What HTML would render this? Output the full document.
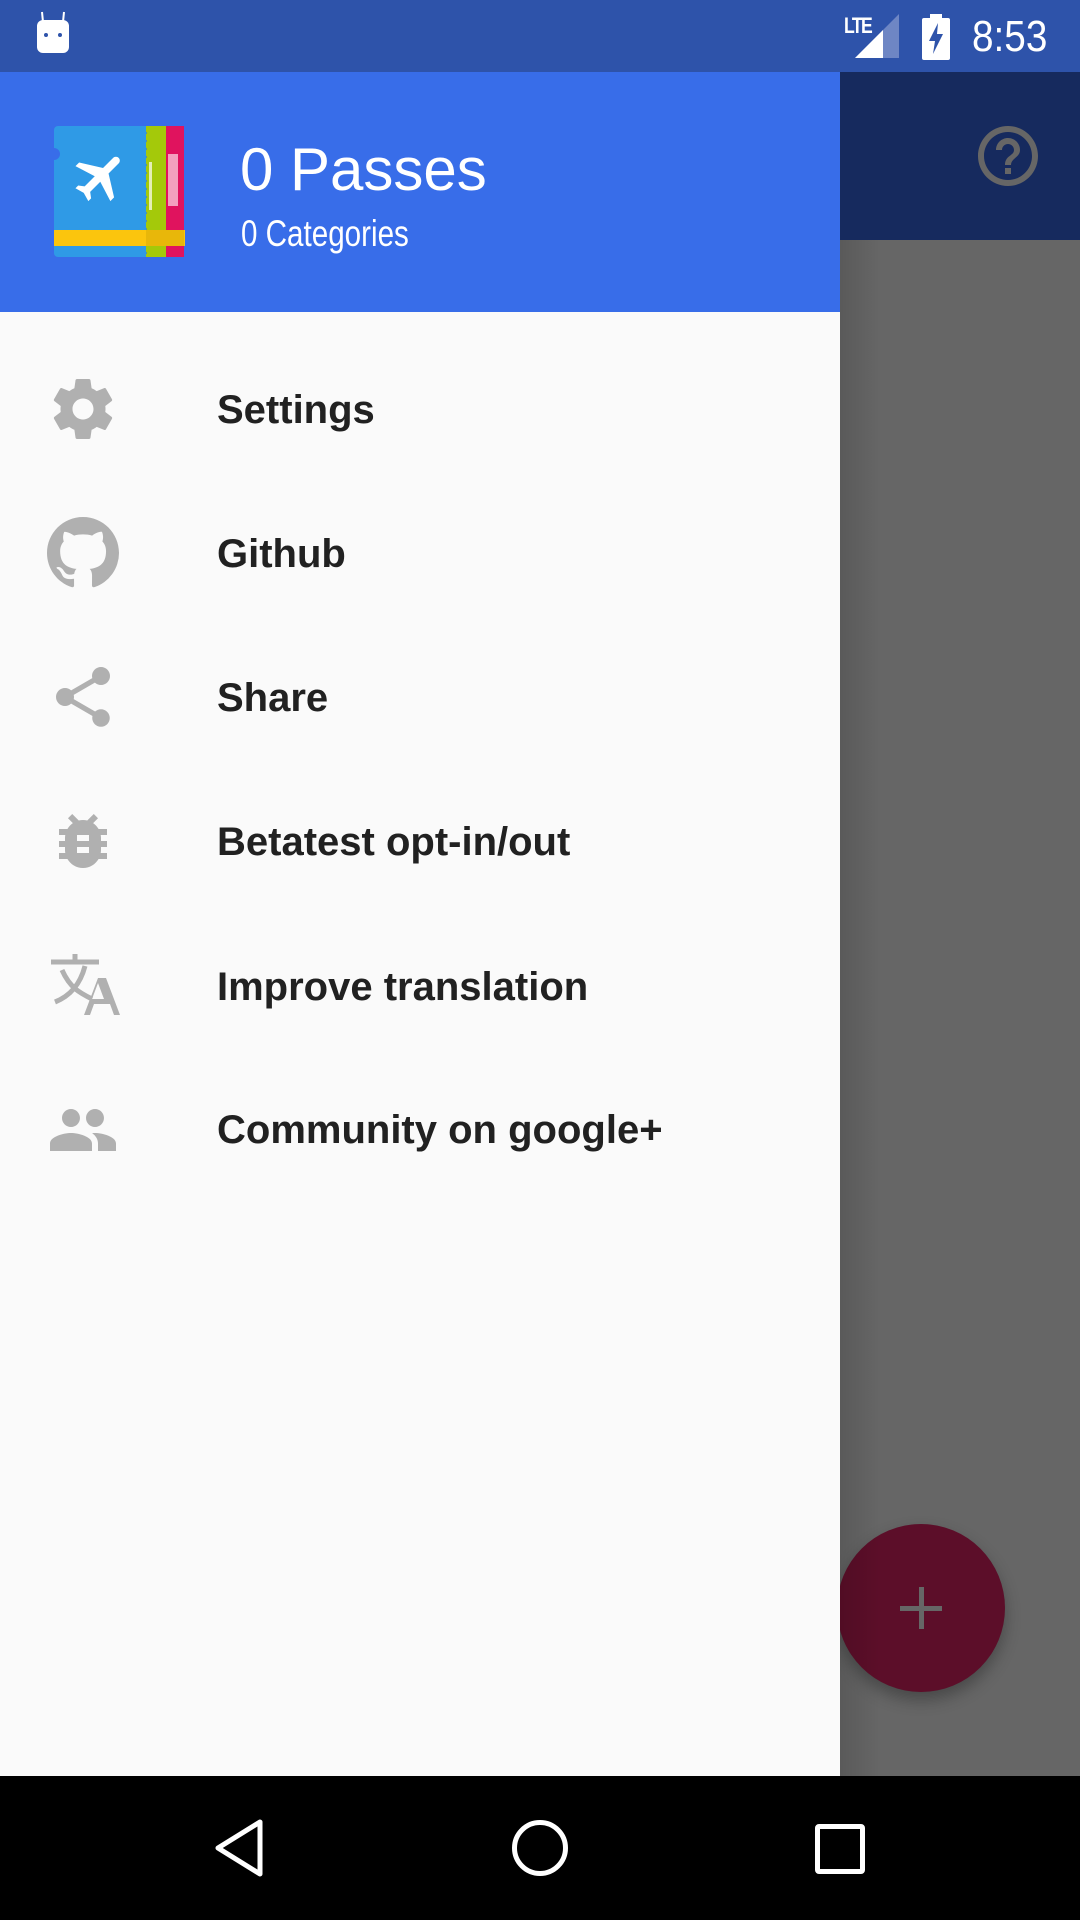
<!DOCTYPE html>
<html><head><meta charset="utf-8">
<style>
*{margin:0;padding:0;box-sizing:border-box}
html,body{width:1080px;height:1920px;overflow:hidden;background:#fafafa;font-family:"Liberation Sans",sans-serif}
.abs{position:absolute}
</style></head>
<body>
<div class="abs" style="left:840px;top:0;width:240px;height:1776px;background:#666"></div>
<div class="abs" style="left:840px;top:72px;width:240px;height:168px;background:#162a5e"></div>
<svg class="abs" style="left:972px;top:120px" width="72" height="72" viewBox="0 0 24 24"><path fill="#666" d="M11 18h2v-2h-2v2zm1-16C6.48 2 2 6.480 2 12s4.48 10 10 10 10-4.48 10-10S17.52 2 12 2zm0 18c-4.41 0-8-3.59-8-8s3.59-8 8-8 8 3.59 8 8-3.59 8-8 8zm0-14c-2.21 0-4 1.79-4 4h2c0-1.1.9-2 2-2s2 .9 2 2c0 2-3 1.75-3 5h2c0-2.25 3-2.5 3-5 0-2.21-1.79-4-4-4z"/></svg>
<div class="abs" style="left:837px;top:1524px;width:168px;height:168px;border-radius:50%;background:#5c0e29;box-shadow:0 8px 16px rgba(0,0,0,0.3)"></div>
<div class="abs" style="left:900px;top:1606px;width:42px;height:5px;background:#666"></div>
<div class="abs" style="left:919px;top:1587px;width:5px;height:42px;background:#666"></div>
<div class="abs" style="left:840px;top:240px;width:40px;height:1536px;background:linear-gradient(to right,rgba(0,0,0,0.12),rgba(0,0,0,0))"></div>

<div class="abs" style="left:0;top:0;width:1080px;height:72px;background:#2e53aa"></div>
<svg class="abs" style="left:34px;top:10px" width="40" height="46" viewBox="0 0 40 46"><line x1="8" y1="2" x2="9" y2="12" stroke="#fff" stroke-width="2"/><line x1="30" y1="2" x2="29" y2="12" stroke="#fff" stroke-width="2"/><rect x="3" y="10" width="32" height="33" rx="6" fill="#fff"/><circle cx="12" cy="25" r="2" fill="#2e53aa"/><circle cx="26" cy="25" r="2" fill="#2e53aa"/></svg>
<div class="abs" style="left:844px;top:13px;color:#fff;font-size:22px;font-weight:bold;letter-spacing:-2px;transform:scaleX(0.8);transform-origin:left">LTE</div>
<svg class="abs" style="left:855px;top:14px" width="44" height="44" viewBox="0 0 44 44"><polygon points="44,0 44,44 0,44" fill="#6e86c4"/><polygon points="28,16 28,44 0,44" fill="#fff"/></svg>
<svg class="abs" style="left:921px;top:14px" width="30" height="46" viewBox="0 0 30 46"><rect x="9" y="0" width="12" height="5" fill="#fff"/><rect x="1" y="4" width="28" height="42" rx="2" fill="#fff"/><polygon points="17,9 8,27 14,27 12,40 22,20 16,20" fill="#2e53aa"/></svg>
<div class="abs" style="left:972px;top:12px;color:#fff;font-size:44px;transform:scaleX(0.88);transform-origin:left">8:53</div>

<div class="abs" style="left:0;top:72px;width:840px;height:1704px;background:#fafafa"></div>
<div class="abs" style="left:0;top:72px;width:840px;height:240px;background:#386de9"></div>
<svg class="abs" style="left:54px;top:126px" width="132" height="132" viewBox="0 0 132 132">
<path d="M108 0h22v131h-22l3-4-3-4 3-4-3-4 3-4-3-4 3-4-3-4 3-4-3-4 3-4-3-4 3-4-3-4 3-4-3-4 3-4-3-4 3-4-3-4 3-4-3-4 3-4-3-4 3-4-3-4 3-4-3-4 3-4-3-4 3-4-3-4z" fill="#e0135e"/>
<path d="M90 0h22v131h-22l3-4-3-4 3-4-3-4 3-4-3-4 3-4-3-4 3-4-3-4 3-4-3-4 3-4-3-4 3-4-3-4 3-4-3-4 3-4-3-4 3-4-3-4 3-4-3-4 3-4-3-4 3-4-3-4 3-4-3-4 3-4-3-4z" fill="#a4c90a"/>
<path d="M4 0h88v131H4a4 4 0 0 1-4-4V34a6 6 0 0 0 0-12V4a4 4 0 0 1 4-4z" fill="#2f9ae6"/>
<rect x="0" y="104" width="131" height="16" fill="#fbc50d"/>
<rect x="92" y="104" width="38" height="16" fill="#e8b70a"/>
<g transform="translate(16,20) scale(2.6) rotate(45 12 12)"><path fill="#fff" d="M21 16v-2l-8-5V3.5c0-.83-.67-1.5-1.5-1.5S10 2.67 10 3.5V9l-8 5v2l8-2.5V19l-2 1.5V22l3.5-1 3.5 1v-1.5L13 19v-5.5l8 2.5z"/></g>
<rect x="95" y="36" width="3" height="48" fill="#fff" opacity="0.7"/>
<rect x="114" y="28" width="10" height="52" fill="#fff" opacity="0.6"/>
</svg>
<div class="abs" style="left:240px;top:134px;color:#fff;font-size:60px;line-height:72px">0 Passes</div>
<div class="abs" style="left:241px;top:212px;color:#fff;font-size:37px;line-height:44px;transform:scaleX(0.8);transform-origin:left;white-space:nowrap">0 Categories</div>

<div style="position:absolute;left:217px;top:6px;font-size:40px;font-weight:bold;color:#212121">
<div class="abs" style="left:0;top:382px;white-space:nowrap">Settings</div>
<div class="abs" style="left:0;top:526px;white-space:nowrap">Github</div>
<div class="abs" style="left:0;top:670px;white-space:nowrap">Share</div>
<div class="abs" style="left:0;top:814px;white-space:nowrap">Betatest opt-in/out</div>
<div class="abs" style="left:0;top:959px;white-space:nowrap">Improve translation</div>
<div class="abs" style="left:0;top:1102px;white-space:nowrap">Community on google+</div>
</div>
<svg class="abs" style="left:47px;top:373px" width="72" height="72" viewBox="0 0 24 24"><path fill="#b0b0b0" d="M19.43 12.98c.04-.32.07-.64.07-.98s-.03-.66-.07-.98l2.11-1.65c.19-.15.24-.42.12-.64l-2-3.46c-.12-.22-.39-.3-.61-.22l-2.490 1c-.52-.4-1.08-.73-1.69-.98l-.38-2.65C14.46 2.18 14.25 2 14 2h-4c-.25 0-.46.18-.49.42l-.38 2.65c-.61.25-1.17.59-1.69.98l-2.49-1c-.23-.09-.49 0-.61.22l-2 3.46c-.13.22-.07.49.12.64l2.11 1.65c-.04.32-.07.65-.07.98s.03.66.07.98l-2.11 1.65c-.19.15-.24.42-.12.64l2 3.46c.12.22.39.3.61.22l2.49-1c.52.4 1.08.73 1.69.98l.38 2.65c.03.24.24.42.49.42h4c.25 0 .46-.18.49-.42l.38-2.65c.61-.25 1.17-.59 1.69-.98l2.49 1c.23.09.49 0 .61-.22l2-3.46c.12-.22.07-.49-.12-.64l-2.11-1.65zM12 15.5c-1.93 0-3.5-1.57-3.5-3.5s1.57-3.5 3.5-3.5 3.5 1.57 3.5 3.5-1.57 3.5-3.5 3.5z"/></svg>
<svg class="abs" style="left:47px;top:517px" width="72" height="72" viewBox="0 0 16 16"><path fill="#b0b0b0" d="M8 0C3.58 0 0 3.580 0 8c0 3.54 2.29 6.53 5.47 7.59.4.07.55-.17.55-.38 0-.19-.01-.82-.01-1.49-2.010.37-2.53-.49-2.69-.94-.09-.23-.48-.94-.82-1.13-.28-.15-.68-.52-.01-.53.63-.01 1.08.58 1.23.82.72 1.21 1.87.87 2.33.66.07-.52.28-.87.51-1.07-1.78-.2-3.64-.89-3.64-3.95 0-.87.31-1.59.82-2.15-.08-.2-.36-1.02.08-2.12 0 0 .67-.21 2.2.82.64-.18 1.32-.27 2-.27.68 0 1.36.09 2 .27 1.53-1.04 2.2-.82 2.2-.82.44 1.1.16 1.92.08 2.12.51.56.82 1.27.82 2.15 0 3.07-1.87 3.75-3.65 3.95.29.25.54.73.54 1.48 0 1.07-.01 1.93-.01 2.2 0 .21.15.46.55.38A8.013 8.013 0 0016 8c0-4.42-3.58-8-8-8z"/></svg>
<svg class="abs" style="left:47px;top:661px" width="72" height="72" viewBox="0 0 24 24"><path fill="#b0b0b0" d="M18 16.08c-.76 0-1.44.3-1.96.77L8.91 12.7c.05-.23.09-.46.09-.7s-.04-.47-.09-.7l7.05-4.11c.54.5 1.25.81 2.04.81 1.66 0 3-1.34 3-3s-1.34-3-3-3-3 1.34-3 3c0 .24.04.47.09.7L8.04 9.81C7.5 9.31 6.79 9 6 9c-1.66 0-3 1.34-3 3s1.34 3 3 3c.79 0 1.5-.31 2.04-.81l7.12 4.16c-.05.21-.08.43-.08.65 0 1.61 1.31 2.92 2.92 2.92 1.61 0 2.92-1.31 2.92-2.92s-1.31-2.92-2.92-2.92z"/></svg>
<svg class="abs" style="left:47px;top:805px" width="72" height="72" viewBox="0 0 24 24"><path fill="#b0b0b0" d="M20 8h-2.81c-.45-.78-1.07-1.45-1.820-1.96L17 4.41 15.59 3l-2.17 2.17C12.96 5.06 12.49 5 12 5c-.49 0-.96.06-1.41.17L8.41 3 7 4.41l1.62 1.63C7.88 6.55 7.26 7.22 6.81 8H4v2h2.09c-.05.33-.09.66-.09 1v1H4v2h2v1c0 .34.04.67.09 1H4v2h2.81c1.04 1.79 2.97 3 5.19 3s4.15-1.21 5.19-3H20v-2h-2.09c.05-.33.09-.66.09-1v-1h2v-2h-2v-1c0-.34-.04-.67-.09-1H20V8zm-6 8h-4v-2h4v2zm0-4h-4v-2h4v2z"/></svg>
<svg class="abs" style="left:0;top:0;width:1080px;height:1920px" width="1080" height="1920">
<g fill="none" stroke="#b0b0b0" stroke-width="5">
<line x1="51" y1="962" x2="99" y2="962"/>
<line x1="75" y1="954" x2="75" y2="962"/>
<path d="M85 966 C80 985 70 996 55 1002"/>
<path d="M62 970 C70 988 80 993 92 999"/>
</g>
<path fill="#b0b0b0" d="M98 978h8l14 37h-6l-4-11h-16l-4 11h-6zm-6 21h12l-6-16z"/>
</svg>
<svg class="abs" style="left:47px;top:1094px" width="72" height="72" viewBox="0 0 24 24"><path fill="#b0b0b0" d="M16 11c1.66 0 2.99-1.34 2.99-3S17.66 5 16 5c-1.66 0-3 1.34-3 3s1.34 3 3 3zm-8 0c1.66 0 2.99-1.34 2.99-3S9.66 5 8 5C6.34 5 5 6.34 5 8s1.34 3 3 3zm0 2c-2.33 0-7 1.17-7 3.5V19h14v-2.5c0-2.33-4.67-3.5-7-3.5zm8 0c-.29 0-.62.02-.97.05 1.16.84 1.97 1.97 1.97 3.45V19h6v-2.5c0-2.33-4.67-3.5-7-3.5z"/></svg>

<div class="abs" style="left:0;top:1776px;width:1080px;height:144px;background:#000"></div>
<svg class="abs" style="left:210px;top:1818px" width="60" height="60" viewBox="0 0 60 60"><polygon points="50,4 50,56 8,30" fill="none" stroke="#fff" stroke-width="5" stroke-linejoin="round"/></svg>
<div class="abs" style="left:512px;top:1820px;width:56px;height:56px;border:5px solid #fff;border-radius:50%"></div>
<div class="abs" style="left:815px;top:1824px;width:50px;height:50px;border:5px solid #fff;border-radius:4px"></div>
</body></html>
